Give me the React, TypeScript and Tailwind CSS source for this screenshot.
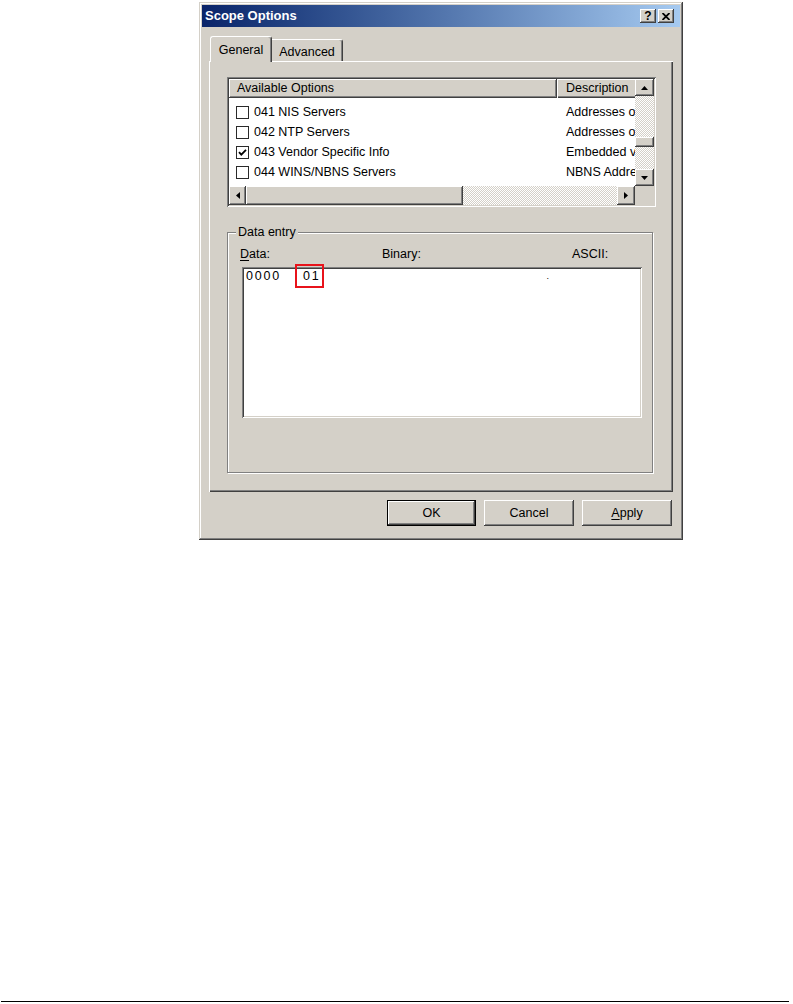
import React from 'react';

const raised =
  'shadow-[inset_-1px_-1px_#404040,inset_1px_1px_#ffffff,inset_-2px_-2px_#808080,inset_2px_2px_#d4d0c8]';
const sunken =
  'shadow-[inset_1px_1px_#808080,inset_-1px_-1px_#ffffff,inset_2px_2px_#404040,inset_-2px_-2px_#d4d0c8]';
const hatch =
  'bg-[image:repeating-conic-gradient(#ffffff_0%_25%,#d4d0c8_0%_50%)] bg-[length:2px_2px]';

type Dir = 'up' | 'down' | 'left' | 'right';

function Arrow({ dir }: { dir: Dir }) {
  const pts = {
    up: '0,4 7,4 3.5,0',
    down: '0,0 7,0 3.5,4',
    left: '4,0 4,7 0,3.5',
    right: '0,0 0,7 4,3.5',
  }[dir];
  const vertical = dir === 'up' || dir === 'down';
  return (
    <svg width={vertical ? 7 : 4} height={vertical ? 4 : 7}>
      <polygon points={pts} fill="#000" />
    </svg>
  );
}

function ScrollBtn({ dir, className }: { dir: Dir; className: string }) {
  return (
    <div className={`flex items-center justify-center bg-[#d4d0c8] ${raised} ${className}`}>
      <Arrow dir={dir} />
    </div>
  );
}

const options = [
  { label: '041 NIS Servers', desc: 'Addresses of NIS servers available to the client', checked: false },
  { label: '042 NTP Servers', desc: 'Addresses of Network Time Protocol servers', checked: false },
  { label: '043 Vendor Specific Info', desc: 'Embedded vendor-specific options', checked: true },
  { label: '044 WINS/NBNS Servers', desc: 'NBNS Address(es) in priority order', checked: false },
];

function Checkbox({ checked }: { checked: boolean }) {
  return (
    <div className="w-[13px] h-[13px] border border-[#2a2a2a] bg-white flex items-center justify-center shrink-0">
      {checked && (
        <svg width="11" height="11" viewBox="0 0 11 11">
          <path d="M2 5.2 L4.3 7.6 L9 2.8" stroke="#000" strokeWidth="1.8" fill="none" />
        </svg>
      )}
    </div>
  );
}

function OptionsList() {
  return (
    <div className={`w-[429px] h-[130px] p-[2px] bg-white flex flex-col ${sunken}`}>
      <div className="flex h-[107px]">
        {/* columns */}
        <div className="flex-1 flex flex-col overflow-hidden">
          <div className="h-[19px] flex shrink-0">
            <div className="w-[328px] shrink-0 pl-[8px] flex items-center bg-[#d4d0c8] shadow-[inset_-1px_-1px_#404040,inset_1px_1px_#ffffff,inset_-2px_-2px_#808080]">
              Available Options
            </div>
            <div className="flex-1 pl-[9px] flex items-center whitespace-nowrap bg-[#d4d0c8] shadow-[inset_1px_1px_#ffffff,inset_0_-1px_#404040,inset_0_-2px_#808080]">
              Description
            </div>
          </div>
          <div className="pt-[4px]">
            {options.map((o) => (
              <div key={o.label} className="h-[20px] flex items-center whitespace-nowrap">
                <div className="w-[328px] shrink-0 pl-[7px] flex items-center gap-[5px]">
                  <Checkbox checked={o.checked} />
                  <span>{o.label}</span>
                </div>
                <span className="pl-[9px]">{o.desc}</span>
              </div>
            ))}
          </div>
        </div>
        {/* vertical scrollbar */}
        <div className="w-[19px] flex flex-col shrink-0">
          <ScrollBtn dir="up" className="h-[17px]" />
          <div className={`flex-1 ${hatch}`}>
            <div className={`mt-[41px] h-[10px] bg-[#d4d0c8] ${raised}`} />
          </div>
          <ScrollBtn dir="down" className="h-[17px]" />
        </div>
      </div>
      {/* horizontal scrollbar */}
      <div className="flex h-[19px]">
        <div className="flex-1 flex">
          <ScrollBtn dir="left" className="w-[17px]" />
          <div className={`w-[217px] bg-[#d4d0c8] ${raised}`} />
          <div className={`flex-1 ${hatch}`} />
          <ScrollBtn dir="right" className="w-[18px]" />
        </div>
        <div className="w-[19px] bg-[#d4d0c8]" />
      </div>
    </div>
  );
}

function DataEntry() {
  return (
    <div className="mt-[25px] w-[426px] h-[241px] relative border border-[#808080] shadow-[inset_1px_1px_#ffffff,1px_1px_#ffffff] pt-[13px] pl-[12px]">
      <span className="absolute -top-[8px] left-[8px] px-[2px] bg-[#d4d0c8] leading-[14px]">Data entry</span>
      <div className="h-[16px] leading-[16px] flex">
        <span className="w-[142px]">
          <span className="underline underline-offset-2">D</span>ata:
        </span>
        <span className="w-[190px]">Binary:</span>
        <span>ASCII:</span>
      </div>
      <div className={`mt-[5px] ml-[2px] w-[400px] h-[151px] bg-white p-[2px] pl-[4px] ${sunken}`}>
        <div className="flex leading-[14px] tracking-[1.8px]">
          <span>0000</span>
          <span className="relative ml-[22px]">
            01
            <span className="absolute -left-[8px] -right-[3px] -top-[5px] -bottom-[5px] border-2 border-[#e8131b]" />
          </span>
          <span className="ml-[226px] text-[9px]">.</span>
        </div>
      </div>
    </div>
  );
}

function Button({ children, isDefault }: { children: React.ReactNode; isDefault?: boolean }) {
  if (isDefault) {
    return (
      <div className="w-[89px] h-[26px] border border-black">
        <div className={`h-full flex items-center justify-center bg-[#d4d0c8] ${raised}`}>{children}</div>
      </div>
    );
  }
  return (
    <div className={`w-[90px] h-[26px] flex items-center justify-center bg-[#d4d0c8] ${raised}`}>{children}</div>
  );
}

function Dialog() {
  return (
    <div className="w-[484px] p-[3px] bg-[#d4d0c8] flex flex-col shadow-[inset_-1px_-1px_#404040,inset_1px_1px_#d4d0c8,inset_-2px_-2px_#808080,inset_2px_2px_#ffffff]">
      {/* Title bar */}
      <div className="h-[22px] flex items-center justify-between pl-[3px] pr-[6px] bg-linear-to-r from-[#0a246a] to-[#a6caf0]">
        <span className="font-bold text-[13px] text-white">Scope Options</span>
        <div className="flex gap-[2px]">
          <div className={`w-[16px] h-[14px] bg-[#d4d0c8] flex items-center justify-center font-bold text-[12px] leading-none ${raised}`}>
            ?
          </div>
          <div className={`w-[16px] h-[14px] bg-[#d4d0c8] flex items-center justify-center ${raised}`}>
            <svg width="8" height="7" viewBox="0 0 8 7">
              <path d="M0.5 0 L7.5 7 M7.5 0 L0.5 7" stroke="#000" strokeWidth="1.8" />
            </svg>
          </div>
        </div>
      </div>

      <div className="px-[7px]">
        {/* Tabs */}
        <div className="mt-[9px] h-[25px] flex items-end pl-[1px] relative z-10">
          <div className="w-[62px] h-[26px] -mb-px bg-[#d4d0c8] border-l border-t border-white border-r border-r-[#404040] rounded-t-[3px] shadow-[inset_-1px_0_#808080] flex justify-center pt-[4px]">
            General
          </div>
          <div className="w-[71px] h-[22px] border-t border-white border-r border-r-[#404040] rounded-tr-[3px] shadow-[inset_-1px_0_#808080] flex justify-center pt-[3px]">
            Advanced
          </div>
        </div>

        {/* Panel */}
        <div className="h-[431px] flex flex-col pl-[18px] pt-[16px] shadow-[inset_1px_1px_#ffffff,inset_-1px_-1px_#404040,inset_-2px_-2px_#808080]">
          <OptionsList />
          <DataEntry />
        </div>
      </div>

      {/* Buttons */}
      <div className="mt-[8px] pb-[11px] pr-[8px] flex justify-end gap-[8px]">
        <Button isDefault>OK</Button>
        <Button>Cancel</Button>
        <Button>
          <span>
            <span className="underline underline-offset-2">A</span>pply
          </span>
        </Button>
      </div>
    </div>
  );
}

export default function App() {
  return (
    <div className="h-[1004px] bg-white flex flex-col font-['Liberation_Sans',Arial,sans-serif] text-[12.5px] text-black">
      <div className="pl-[199px] pt-[2px]">
        <Dialog />
      </div>
      <div className="mt-auto mb-[2px] ml-[1px] mr-[4px] h-px bg-black" />
    </div>
  );
}
